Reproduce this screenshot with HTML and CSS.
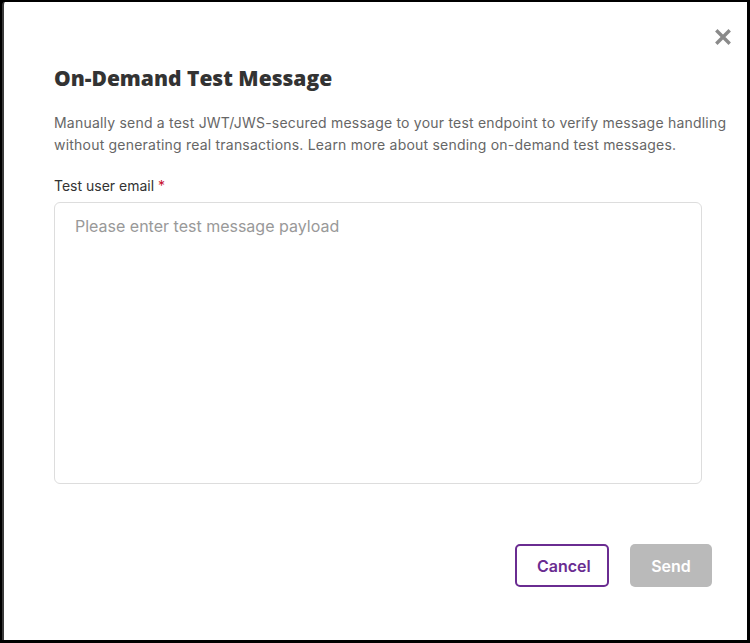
FILE: index.html
```html
<!DOCTYPE html>
<html lang="en">
<head>
    <meta charset="UTF-8">
    <meta name="viewport" content="width=device-width, initial-scale=1.0">
    <title>On-Demand Test Message</title>
    <link rel="stylesheet" href="styles.css">
</head>
<body>

    <div class="modal">
        <button class="modal-close" aria-label="Close">
            <svg width="16" height="16" viewBox="0 0 16 16">
                <path d="M2.5 2.5 L13.5 13.5 M13.5 2.5 L2.5 13.5" stroke="#8a8a8a" stroke-width="3.4" stroke-linecap="square"/>
            </svg>
        </button>

        <h1 class="modal-title">On-Demand Test Message</h1>

        <p class="modal-desc">Manually send a test JWT/JWS-secured message to your test endpoint to verify message handling without generating real transactions. Learn more about sending on-demand test messages.</p>

        <label class="field-label" for="payload">Test user email <span class="required">*</span></label>
        <textarea id="payload" class="field-input" placeholder="Please enter test message payload"></textarea>

        <div class="modal-actions">
            <button class="btn btn-outline">Cancel</button>
            <button class="btn btn-disabled" disabled>Send</button>
        </div>
    </div>

</body>
</html>
```

FILE: styles.css
```css
html, body {
    height: 100%;
}

body {
    margin: 0;
    padding: 2px 3px 3px 2px;
    box-sizing: border-box;
    background-color: #000;
    font-family: 'Inter', 'Liberation Sans', sans-serif;
    color: #333;
}

.modal {
    position: relative;
    height: 100%;
    box-sizing: border-box;
    background-color: #fff;
    border-left: 2px solid #3a3a3a;
    border-top-left-radius: 3px;
    padding: 63px 16px 0 50px;
}

.modal-close {
    position: absolute;
    top: 27px;
    right: 16px;
    padding: 0;
    border: none;
    background: none;
    cursor: pointer;
}

.modal-title {
    margin: 0;
    font-family: 'Open Sans', sans-serif;
    font-weight: 800;
    font-size: 21px;
    line-height: 27px;
    color: #333;
}

.modal-desc {
    margin: 20px 0 0;
    font-size: 14px;
    line-height: 22px;
    letter-spacing: 0.21px;
    color: #666;
}

.field-label {
    display: block;
    margin-top: 20px;
    font-size: 14px;
    line-height: 20px;
    color: #333;
}

.required {
    color: #c8102e;
}

.field-input {
    display: block;
    width: 648px;
    height: 282px;
    margin-top: 6px;
    box-sizing: border-box;
    padding: 12px 20px;
    border: 1px solid #ddd;
    border-radius: 6px;
    resize: none;
    font-family: inherit;
    font-size: 16px;
    line-height: 22px;
    color: #333;
}

.field-input::placeholder {
    color: #999;
}

.modal-actions {
    display: flex;
    justify-content: flex-end;
    gap: 21px;
    width: 658px;
    margin-top: 60px;
}

.btn {
    height: 43px;
    padding: 0 20px;
    border-radius: 5px;
    font-family: inherit;
    font-size: 16px;
    font-weight: 600;
    cursor: pointer;
}

.btn-outline {
    width: 94px;
    background-color: #fff;
    border: 2px solid #6a2c91;
    color: #6a2c91;
}

.btn-disabled {
    width: 82px;
    background-color: #bababa;
    border: none;
    color: #fff;
    cursor: default;
}
```
